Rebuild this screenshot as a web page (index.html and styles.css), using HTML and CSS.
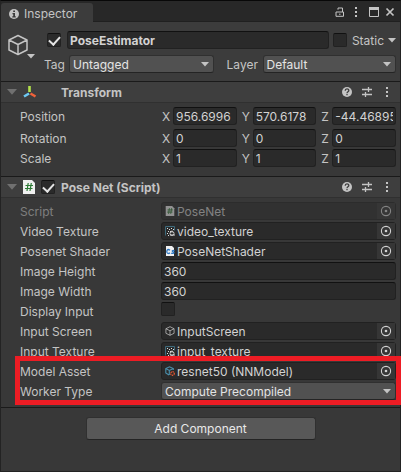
FILE: index.html
```html
<!DOCTYPE html>
<html lang="en">
<head>
<meta charset="utf-8">
<title>Inspector</title>
<link rel="stylesheet" href="styles.css">
</head>
<body>
<svg class="defs" aria-hidden="true">
  <symbol id="arrow" viewBox="0 0 8 5"><path d="M0 0h8L4 4.6z" fill="currentColor"/></symbol>
  <symbol id="target" viewBox="0 0 12 12"><circle cx="6" cy="6" r="4.6" fill="none" stroke="currentColor" stroke-width="1.1"/><circle cx="6" cy="6" r="1.3" fill="currentColor"/></symbol>
  <symbol id="dots" viewBox="0 0 4 12"><path d="M1 1h2v2H1zM1 5h2v2H1zM1 9h2v2H1z" fill="currentColor"/></symbol>
  <symbol id="help" viewBox="0 0 12 12"><circle cx="6" cy="6" r="5" fill="currentColor"/><path d="M4.2 4.8C4.2 2.3 7.8 2.4 7.8 4.6 7.8 5.8 6 5.8 6 7.2M6 8v1.3" fill="none" stroke="#3e3e3e" stroke-width="1.3"/></symbol>
  <symbol id="preset" viewBox="0 0 12 12"><path d="M1 3.5h6M8 3.500h3M7.500 1v5M1 8.500h3M5 8.500h6M4.500 6v5" fill="none" stroke="currentColor" stroke-width="1.3"/></symbol>
  <symbol id="cube" viewBox="0 0 20 22"><path d="M10 1.500 19 6v10l-9 4.500L1 16V6zM1 6l9 4.500L19 6M10 10.500v10" fill="none" stroke="currentColor" stroke-width="1.500" stroke-linejoin="round"/></symbol>
  <symbol id="script" viewBox="0 0 12 14"><path d="M0 0h9l3 3v11H0z" fill="#f0f0f0"/><path d="M5.200 3 4 11M8.300 3 7 11M2.500 5.500h7.500M2 8.500h7.500" stroke="#2c7a34" stroke-width="1.200"/></symbol>
  <symbol id="texture" viewBox="0 0 10 10"><path d="M.5 9.500v-9h9v4" fill="none" stroke="#3f6b7c"/><path d="M2 2h1v1H2zM4 3h1v1H4zM6 2h1v1H6zM8 3h1v1H8zM3 5h1v1H3zM5 5h1v1H5zM2 7h1v1H2zM3 9h1v1H3z" fill="#ddd"/><circle cx="7" cy="7.500" r="2" fill="none" stroke="#ccc"/><path d="M7 4.500v2M5 9h5" stroke="#ccc"/></symbol>
</svg>
<main class="window">
  <header class="tabbar">
    <div class="tab">
      <svg class="i10" viewBox="0 0 10 10"><circle cx="5" cy="5" r="5" fill="currentColor"/><path d="M4.200 1.500h1.800v1.500H4.200zM3.500 4h2.500v3.200h.8v1.200H3.300V7.200h.9V5.200h-.7z" fill="#3c3c3c"/></svg>
      <span>Inspector</span>
    </div>
    <div class="tools">
      <button aria-label="Lock"><svg class="i10" viewBox="0 0 10 10"><path d="M1 5h7.500v4.300H1zM3 2.700V1h4.500v4M4 7.200h1.500" fill="none" stroke="currentColor"/></svg></button>
      <button aria-label="Menu"><svg class="dots"><use href="#dots"/></svg></button>
      <button aria-label="Maximize"><svg class="i10" viewBox="0 0 10 10"><path d="M.5.500h9v9h-9z" fill="none" stroke="currentColor"/><path d="M0 0h10v3H0z" fill="currentColor"/></svg></button>
      <button aria-label="Close"><svg class="i10" viewBox="0 0 10 10"><path d="m1.500 1.500 7 7m0-7-7 7" stroke="currentColor" stroke-width="1.700"/></svg></button>
    </div>
  </header>

  <section class="object">
    <button class="object-icon" aria-label="Select icon"><svg class="cube"><use href="#cube"/></svg><svg class="arrow corner"><use href="#arrow"/></svg></button>
    <div class="object-rows">
      <div class="object-row">
        <input type="checkbox" checked aria-label="Active">
        <input class="field name" type="text" value="PoseEstimator" aria-label="Name">
        <input type="checkbox" id="static">
        <label for="static" class="static">Static</label>
        <button aria-label="Static options"><svg class="arrow"><use href="#arrow"/></svg></button>
      </div>
      <div class="object-row tags">
        <label for="tag" class="tag">Tag</label>
        <div class="drop wide"><select id="tag"><option>Untagged</option></select><svg class="arrow"><use href="#arrow"/></svg></div>
        <label for="layer" class="layer">Layer</label>
        <div class="drop"><select id="layer"><option>Default</option></select><svg class="arrow"><use href="#arrow"/></svg></div>
      </div>
    </div>
  </section>

  <section class="component">
    <header class="title">
      <svg class="arrow fold"><use href="#arrow"/></svg>
      <svg class="axes" viewBox="0 0 14 14"><path d="M6.500 1v6" stroke="#b4e34b" stroke-width="2.600"/><path d="m6 8.500-5 3" stroke="#6dc8f2" stroke-width="2.600"/><path d="m7.500 8.500 5 3" stroke="#f0623a" stroke-width="2.600"/></svg>
      <h2 class="indent">Transform</h2>
      <button aria-label="Help"><svg class="i12"><use href="#help"/></svg></button>
      <button aria-label="Presets"><svg class="i12"><use href="#preset"/></svg></button>
      <button aria-label="Menu"><svg class="dots"><use href="#dots"/></svg></button>
    </header>
    <div class="rows transform">
      <div class="row position"><span>Position</span><div class="vector">
        <label><span>X</span><input class="field" value="956.6996"></label><label><span>Y</span><input class="field" value="570.6178"></label><label><span>Z</span><input class="field" value="-44.46895"></label></div></div>
      <div class="row"><span>Rotation</span><div class="vector">
        <label><span>X</span><input class="field" value="0"></label><label><span>Y</span><input class="field" value="0"></label><label><span>Z</span><input class="field" value="0"></label></div></div>
      <div class="row"><span>Scale</span><div class="vector">
        <label><span>X</span><input class="field" value="1"></label><label><span>Y</span><input class="field" value="1"></label><label><span>Z</span><input class="field" value="1"></label></div></div>
    </div>
  </section>

  <section class="component">
    <header class="title">
      <svg class="arrow fold"><use href="#arrow"/></svg>
      <svg class="script"><use href="#script"/></svg>
      <input type="checkbox" id="enabled" checked>
      <h2><label for="enabled">Pose Net (Script)</label></h2>
      <button aria-label="Help"><svg class="i12"><use href="#help"/></svg></button>
      <button aria-label="Presets"><svg class="i12"><use href="#preset"/></svg></button>
      <button aria-label="Menu"><svg class="dots"><use href="#dots"/></svg></button>
    </header>
    <div class="rows">
      <div class="row disabled"><span>Script</span><div class="field asset"><svg class="i10"><use href="#script"/></svg><span>PoseNet</span><button disabled aria-label="Pick script"><svg class="i12"><use href="#target"/></svg></button></div></div>
      <div class="row"><span>Video Texture</span><div class="field asset"><svg class="i10"><use href="#texture"/></svg><span>video_texture</span><button aria-label="Pick video texture"><svg class="i12"><use href="#target"/></svg></button></div></div>
      <div class="row"><span>Posenet Shader</span><div class="field asset"><svg class="i10" viewBox="0 0 10 10"><path d="M1 0h6l2 2v8H1z" fill="#f0f0f0"/><path d="M5 4.200C2.500 2.500 1.300 4.500 2 6.500c.6 1.300 2 1.200 3 .3M9.500 4.800c-2-1-3 .5-1.500 1 2 .7.500 2.200-1.800 1.300" fill="none" stroke="#2d78c4" stroke-width="1.300"/></svg><span>PoseNetShader</span><button aria-label="Pick shader"><svg class="i12"><use href="#target"/></svg></button></div></div>
      <div class="row"><label for="h">Image Height</label><input class="field" id="h" value="360"></div>
      <div class="row"><label for="w">Image Width</label><input class="field" id="w" value="360"></div>
      <div class="row"><label for="di">Display Input</label><input type="checkbox" id="di"></div>
      <div class="row"><span>Input Screen</span><div class="field asset"><svg class="i10"><use href="#cube"/></svg><span>InputScreen</span><button aria-label="Pick input screen"><svg class="i12"><use href="#target"/></svg></button></div></div>
      <div class="row"><span>Input Texture</span><div class="field asset"><svg class="i10"><use href="#texture"/></svg><span>input_texture</span><button aria-label="Pick input texture"><svg class="i12"><use href="#target"/></svg></button></div></div>
      <div class="marked">
        <div class="row"><span>Model Asset</span><div class="field asset"><svg class="i10" viewBox="0 0 10 10"><path d="M4 9 .8 7V2.500L4.500.800 8.300 2.500V4M.8 2.500l3.500 2 4-2M4.300 4.500V9" fill="none" stroke="#4a90ad" stroke-width="1.100"/><circle cx="7.500" cy="7.500" r="1.800" fill="none" stroke="#dd5532" stroke-width="1.300" stroke-dasharray="1.300 .6"/></svg><span>resnet50 (NNModel)</span><button aria-label="Pick model"><svg class="i12"><use href="#target"/></svg></button></div></div>
        <div class="row"><label for="worker">Worker Type</label><div class="drop"><select id="worker"><option>Compute Precompiled</option></select><svg class="arrow"><use href="#arrow"/></svg></div></div>
      </div>
    </div>
  </section>

  <footer class="footer"><button class="add">Add Component</button></footer>
</main>
</body>
</html>
```
FILE: styles.css
```css
* { box-sizing: border-box; }
body {
  margin: 0;
  background: #383838;
  color: #c4c4c4;
  font: 12px/18px Inter, "Liberation Sans", sans-serif;
}
.defs { position: absolute; width: 0; height: 0; }
.window {
  min-height: 100vh;
  border: 1px solid #232323;
  border-top-color: #080808;
  background: #383838;
}
svg { display: block; flex: none; }
.i10 { width: 10px; height: 10px; }
.i12 { width: 12px; height: 12px; }
.dots { width: 4px; height: 12px; }
.arrow { width: 8px; height: 5px; }
button, input, select { margin: 0; font: inherit; color: inherit; }
button { padding: 0; border: 0; background: none; }

.tabbar {
  display: flex;
  justify-content: space-between;
  height: 21px;
  padding-top: 2px;
  background: #282828;
  border-bottom: 1px solid #202020;
}
.tab {
  display: flex;
  align-items: center;
  gap: 5px;
  height: 19px;
  padding: 2px 16px 0 8px;
  border-radius: 3px 3px 0 0;
  background: #3c3c3c;
}
.tools { display: flex; align-items: center; gap: 12px; padding-right: 5px; }
.tools button:nth-child(2) { margin-left: -3px; }
.tools button:nth-child(3) { margin-left: -1px; }
.tools button:nth-child(4) { margin-left: -6px; }

.object { display: flex; padding: 9px 4px 8px 6px; background: #3c3c3c; }
.object-icon { position: relative; width: 28px; height: 28px; }
.cube { width: 20px; height: 22px; margin-left: 1px; }
.corner { position: absolute; right: 0; bottom: 0; }
.object-rows { flex: 1; display: grid; gap: 6px; min-width: 0; padding-left: 12px; }
.object-row { display: flex; align-items: center; height: 18px; }
.object-row > label { align-self: flex-start; padding-top: 1px; }
.name { flex: 1; min-width: 0; margin: 0 4px 0 6px; font-weight: 700; }
.static { margin: 0 4px 0 5px; }
.tag { width: 25px; }
.object-row .layer { width: 49px; padding-left: 13px; }
.tags { margin-left: -3px; }

.field {
  width: 100%;
  height: 18px;
  padding: 1px 2px 0;
  border: 1px solid #212121;
  border-top-color: #111;
  border-radius: 3px;
  background: #2a2a2a;
  color: #d2d2d2;
}
.object-row .name { width: auto; }
input[type="checkbox"] {
  appearance: none;
  flex: none;
  width: 14px;
  height: 14px;
  border: 1px solid #212121;
  border-top-color: #111;
  border-radius: 2px;
  background: #2a2a2a;
}
input[type="checkbox"]:checked::before {
  content: "";
  display: block;
  width: 9px;
  height: 5px;
  margin: 2px 1px;
  border: solid #e4e4e4;
  border-width: 0 0 2px 2px;
  transform: rotate(-48deg);
}
.drop { position: relative; flex: 12; min-width: 0; }
.wide { flex-grow: 13; }
.drop select {
  display: block;
  appearance: none;
  width: 100%;
  height: 18px;
  padding: 0 20px 0 3px;
  border: 1px solid #303030;
  border-bottom-color: #242424;
  border-radius: 3px;
  background: #515151;
  color: #e4e4e4;
}
.drop .arrow { position: absolute; right: 5px; top: 7px; pointer-events: none; }

.component { border-top: 1px solid #1a1a1a; }
.title {
  display: flex;
  align-items: center;
  height: 21px;
  padding: 0 11px 0 6px;
  border-bottom: 1px solid #303030;
  background: #3e3e3e;
}
.title .fold { width: 10px; height: 8px; margin-right: 6px; color: #707070; }
.axes { width: 14px; height: 14px; }
.script { width: 12px; height: 14px; margin-right: 6px; }
.title h2 { flex: 1; margin: 0 0 0 6px; padding-top: 2px; font: inherit; font-weight: 700; }
.title .indent { margin-left: 24px; }
.title button { margin-left: 8px; }
.title button:nth-last-child(1) { margin-left: 12px; }

.rows { display: grid; gap: 2px; padding: 4px 4px 7px 19px; }
.transform { padding-bottom: 9px; }
.position { margin-bottom: 2px; }
.row {
  display: grid;
  grid-template-columns: 141px minmax(0, 1fr);
  align-items: start;
  height: 18px;
}
.row > span, .row > label, .vector span { padding-top: 1px; }
.vector { display: grid; grid-template-columns: repeat(3, minmax(0, 1fr)); gap: 5px; padding-left: 1px; }
.vector label { display: grid; grid-template-columns: 11px minmax(0, 1fr); height: 18px; }
.asset { display: flex; align-items: center; gap: 2px; padding: 0 0 0 3px; border-top-color: #212121; line-height: 16px; }
.asset span { flex: 1; padding-top: 2px; }
.asset button { display: grid; place-items: center; width: 18px; height: 16px; background: #363636; }
.disabled span, .disabled svg { opacity: .5; }
.disabled .field { background: #313131; border-color: #2c2c2c; }

.marked { position: relative; display: grid; gap: 2px; }
.marked::after {
  content: "";
  position: absolute;
  inset: -6px -5px -5px -5px;
  border: 5px solid #ed1c24;
  pointer-events: none;
}
.footer { padding: 9px 12px; border-top: 1px solid #1a1a1a; text-align: center; }
.add {
  width: 230px;
  max-width: 100%;
  height: 23px;
  border: 1px solid #303030;
  border-bottom-color: #242424;
  border-radius: 3px;
  background: #585858;
  color: #e8e8e8;
}
```
